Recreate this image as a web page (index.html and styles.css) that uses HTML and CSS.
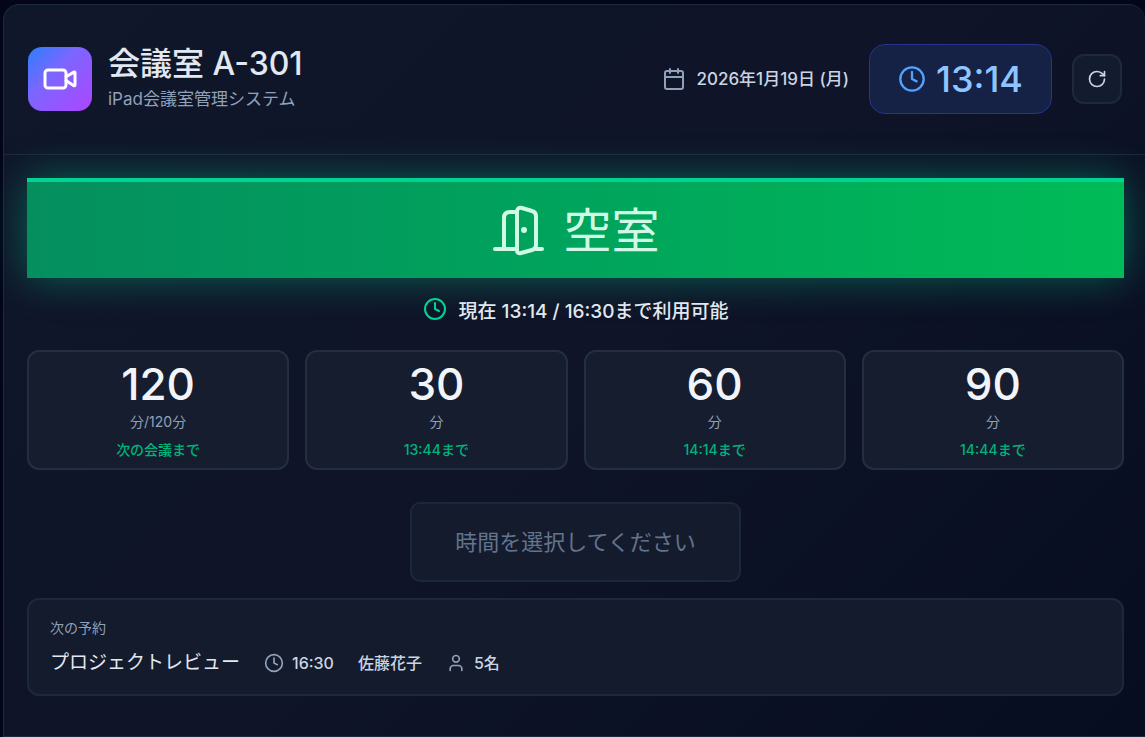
FILE: index.html
```html
<!DOCTYPE html>
<html lang="ja">
<head>
  <meta charset="UTF-8">
  <meta name="viewport" content="width=device-width, initial-scale=1">
  <title>会議室 A-301</title>
  <link rel="stylesheet" href="styles.css">
</head>
<body>
  <div class="panel">
    <header class="header">
      <div class="room">
        <div class="room-icon">
          <svg class="icon" width="36" height="36" viewBox="0 0 24 24"><path d="m16 13 5.223 3.482a.5.5 0 0 0 .777-.416V7.87a.5.5 0 0 0-.752-.432L16 10.5"/><rect x="2" y="6" width="14" height="12" rx="2"/></svg>
        </div>
        <div>
          <h1>会議室 A-301</h1>
          <p class="subtitle">iPad会議室管理システム</p>
        </div>
      </div>
      <div class="header-right">
        <div class="date">
          <svg class="icon" width="24" height="24" viewBox="0 0 24 24"><path d="M8 2v4M16 2v4M3 10h18"/><rect x="3" y="4" width="18" height="18" rx="2"/></svg>
          <span>2026年1月19日 (月)</span>
        </div>
        <div class="time">
          <svg class="icon" width="28" height="28" viewBox="0 0 24 24"><circle cx="12" cy="12" r="10"/><path d="M12 6v6l4 2"/></svg>
          <span>13:14</span>
        </div>
        <button class="refresh" type="button" aria-label="更新">
          <svg class="icon" width="20" height="20" viewBox="0 0 24 24"><path d="M21 12a9 9 0 1 1-9-9c2.520 0 4.930 1 6.740 2.740L21 8"/><path d="M21 3v5h-5"/></svg>
        </button>
      </div>
    </header>

    <main class="content">
      <section class="status">
        <svg class="icon" width="56" height="56" viewBox="0 0 56 56"><path d="M4 47H24M45 47H51M13 47V16Q13 10 19 10H25M26 10V48Q26 52 30 51L41 48Q45 47 45 43V14Q45 10 41 9L31 6Q26 5 26 10Z"/><circle class="knob" cx="33" cy="28" r="3"/></svg>
        <span>空室</span>
      </section>

      <p class="availability">
        <svg class="icon" width="24" height="24" viewBox="0 0 24 24"><circle cx="12" cy="12" r="10"/><path d="M12 6v6l4 2"/></svg>
        <span>現在 13:14 / 16:30まで利用可能</span>
      </p>

      <div class="durations">
        <button class="duration" type="button">
          <span class="minutes">120</span>
          <span class="unit">分/120分</span>
          <span class="until">次の会議まで</span>
        </button>
        <button class="duration" type="button">
          <span class="minutes">30</span>
          <span class="unit">分</span>
          <span class="until">13:44まで</span>
        </button>
        <button class="duration" type="button">
          <span class="minutes">60</span>
          <span class="unit">分</span>
          <span class="until">14:14まで</span>
        </button>
        <button class="duration" type="button">
          <span class="minutes">90</span>
          <span class="unit">分</span>
          <span class="until">14:44まで</span>
        </button>
      </div>

      <button class="submit" type="button" disabled>時間を選択してください</button>

      <section class="next">
        <h2>次の予約</h2>
        <div class="next-row">
          <span class="next-title">プロジェクトレビュー</span>
          <span class="meta">
            <svg class="icon" width="20" height="20" viewBox="0 0 24 24"><circle cx="12" cy="12" r="10"/><path d="M12 6v6l4 2"/></svg>
            16:30
          </span>
          <span class="meta">佐藤花子</span>
          <span class="meta">
            <svg class="icon" width="20" height="20" viewBox="0 0 24 24"><circle cx="12" cy="7" r="4"/><path d="M19 21v-2a4 4 0 0 0-4-4H9a4 4 0 0 0-4 4v2"/></svg>
            5名
          </span>
        </div>
      </section>
    </main>
  </div>
</body>
</html>
```

FILE: styles.css
```css
* {
  box-sizing: border-box;
}
body {
  margin: 0;
  min-height: 100vh;
  padding: 4px 0 1px 3px;
  display: flex;
  background: #020618;
  color: #e2e8f0;
  font-family: Inter, "Noto Sans CJK JP", sans-serif;
}
h1, h2, p {
  margin: 0;
  font-weight: 500;
}
button {
  font-family: inherit;
  padding: 0;
}
.icon {
  flex: none;
  fill: none;
  stroke: currentColor;
  stroke-width: 2;
  stroke-linecap: round;
  stroke-linejoin: round;
}
.panel {
  flex: 1;
  border: 1px solid #1d293d;
  border-right: none;
  border-radius: 16px 16px 0 0;
  background: linear-gradient(135deg, #0f172b, #0f1428 50%, #070d20);
}

/* header */
.header {
  height: 150px;
  padding: 0 23px 2px 24px;
  display: flex;
  align-items: center;
  justify-content: space-between;
  border-bottom: 1px solid #1d293d;
}
.room {
  display: flex;
  align-items: center;
  gap: 16px;
}
.room-icon {
  width: 64px;
  height: 64px;
  display: flex;
  align-items: center;
  justify-content: center;
  border-radius: 14px;
  background: linear-gradient(135deg, #2b7fff, #7c66ff 40%, #ad46ff);
  color: white;
}
h1 {
  font-size: 32px;
  line-height: 40px;
}
.subtitle {
  color: #90a1b9;
  font-size: 17px;
  font-weight: 400;
  line-height: 30px;
}
.header-right {
  display: flex;
  align-items: center;
  gap: 20px;
}
.date {
  display: flex;
  align-items: center;
  gap: 10px;
  color: #cad5e2;
  font-size: 17px;
  font-weight: 500;
  line-height: 20px;
}
.date .icon {
  color: #90a1b9;
}
.time {
  height: 70px;
  padding: 0 28px;
  display: flex;
  align-items: center;
  gap: 10px;
  border: 1px solid #24358b;
  border-radius: 16px;
  background: #162146;
  color: #8ec5ff;
  font-size: 36px;
  font-weight: 500;
}
.time .icon {
  color: #51a2ff;
}
.refresh {
  width: 50px;
  height: 50px;
  display: flex;
  align-items: center;
  justify-content: center;
  border: 2px solid #1d293d;
  border-radius: 12px;
  background: #131c2e;
  color: #cad5e2;
}

/* content */
.content {
  padding: 23px 21px 40px 23px;
  display: flex;
  flex-direction: column;
}
.status {
  height: 100px;
  display: flex;
  align-items: center;
  justify-content: center;
  gap: 16px;
  border-top: 4px solid #00d492;
  background: linear-gradient(90deg, #058f5f, #00a45c 50%, #00bb57);
  box-shadow: 0 0 40px rgba(0, 212, 146, 0.4);
  color: #d0fae5;
  font-size: 48px;
  font-weight: 400;
}
.status .icon {
  stroke-width: 4;
}
.status span {
  padding-bottom: 6px;
}
.status .knob {
  fill: currentColor;
  stroke: none;
}
.availability {
  height: 72px;
  padding-bottom: 10px;
  display: flex;
  align-items: center;
  justify-content: center;
  gap: 12px;
  font-size: 19px;
}
.availability .icon {
  color: #00d492;
}
.durations {
  display: grid;
  grid-template-columns: repeat(4, 1fr);
  gap: 16px;
}
.duration {
  height: 120px;
  padding-bottom: 2px;
  display: flex;
  flex-direction: column;
  align-items: center;
  border: 2px solid #232f41;
  border-radius: 12px;
  background: #151d2f;
  font-size: 14px;
  font-weight: 500;
}
.minutes {
  padding-top: 8px;
  color: #f1f5f9;
  font-size: 44px;
  line-height: 48px;
}
.unit {
  color: #90a1b9;
  line-height: 28px;
  font-weight: 400;
}
.until {
  color: #00b37b;
  line-height: 28px;
}
.submit {
  align-self: center;
  height: 80px;
  margin: 32px 0 16px;
  padding: 0 43px 4px;
  border: 2px solid #1b2839;
  border-radius: 10px;
  background: #141b2d;
  color: #62748e;
  font-size: 22px;
  font-weight: 400;
}
.next {
  height: 98px;
  padding: 14px 21px;
  border: 2px solid #1d293b;
  border-radius: 12px;
  background: #141b2d;
}
h2 {
  color: #90a1b9;
  font-size: 14px;
  font-weight: 400;
  line-height: 28px;
}
.next-row {
  display: flex;
  align-items: center;
  gap: 24px;
  line-height: 42px;
}
.next-title {
  font-size: 19px;
  font-weight: 400;
}
.meta {
  display: flex;
  align-items: center;
  gap: 8px;
  color: #cad5e2;
  font-size: 16px;
  font-weight: 500;
}
.meta .icon {
  color: #90a1b9;
}
```
